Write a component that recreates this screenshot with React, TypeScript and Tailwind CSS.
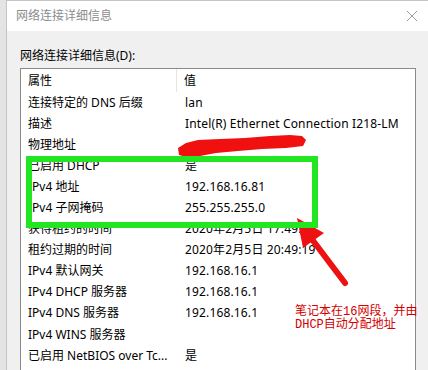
import React from "react";

const rows: [string, string][] = [
  ["连接特定的 DNS 后缀", "lan"],
  ["描述", "Intel(R) Ethernet Connection I218-LM"],
  ["物理地址", ""],
  ["已启用 DHCP", "是"],
  ["IPv4 地址", "192.168.16.81"],
  ["IPv4 子网掩码", "255.255.255.0"],
  ["获得租约的时间", "2020年2月5日 17:49:19"],
  ["租约过期的时间", "2020年2月5日 20:49:19"],
  ["IPv4 默认网关", "192.168.16.1"],
  ["IPv4 DHCP 服务器", "192.168.16.1"],
  ["IPv4 DNS 服务器", "192.168.16.1"],
  ["IPv4 WINS 服务器", ""],
  ["已启用 NetBIOS over Tc...", "是"],
];

export default function App() {
  return (
    <div
      className="relative w-[428px] h-[370px] overflow-hidden bg-[#e4e4e4] flex"
      style={{ fontFamily: '"Noto Sans", "Noto Sans CJK SC", sans-serif' }}
    >
      <div className="w-[6px] shrink-0 bg-[#e4e4e4]" />
      <div className="flex-1 flex flex-col border-l border-t border-[#c4c4c4] bg-[#f0f0f0]">
        <div className="h-[30px] shrink-0 bg-white flex items-center justify-between pl-[9px] pr-[9px]">
          <span className="text-[12px] text-[#8c8c8c]">网络连接详细信息</span>
          <svg width="12" height="12" viewBox="0 0 12 12" className="mr-[1px]">
            <path d="M1 1 L11 11 M11 1 L1 11" stroke="#9a9a9a" strokeWidth="1" fill="none" />
          </svg>
        </div>
        <div className="flex-1 flex flex-col pl-[13px] pr-[12px]">
          <div className="h-[37px] shrink-0 flex items-end pb-[6px] text-[12px] text-black leading-none">
            网络连接详细信息(D):
          </div>
          <div className="flex-1 bg-white border border-[#8a8a8a] border-b-0 text-[12px] text-black">
            <div className="h-[23px] flex items-center">
              <div className="w-[156px] pl-[7px] border-r border-[#e5e5e5] h-full flex items-center">属性</div>
              <div className="pl-[7px]">值</div>
            </div>
            {rows.map(([k, v], i) => (
              <div key={i} className="h-[21.1px] flex items-center whitespace-nowrap">
                <div className="w-[157px] pl-[7px] overflow-hidden">{k}</div>
                <div className="pl-[7px] tracking-[0.15px]">{v}</div>
              </div>
            ))}
          </div>
        </div>
      </div>

      {/* red scribble and arrow */}
      <svg className="absolute left-0 top-0 pointer-events-none" width="428" height="370" viewBox="0 0 428 370">
        <polygon
          points="178,148 186,143 198,140 220,139 245,138 270,136 290,135 302,136 306,140 303,146 286,148 262,149 238,151 216,153 200,156 186,157 179,155"
          fill="#f01010"
        />
        <line x1="345" y1="283" x2="311" y2="238" stroke="#ee1111" strokeWidth="6" strokeLinecap="round" />
        <polygon points="297,218 324,233 303,248" fill="#ee1111" />
      </svg>

      {/* green box */}
      <div className="absolute left-[26px] top-[156px] w-[292px] h-[72px] border-[6px] border-[#22e622]" />

      {/* annotation */}
      <div
        className="absolute left-[295px] top-[306px] text-[12px] leading-[13px] text-[#d40000] whitespace-nowrap"
        style={{ fontFamily: '"Liberation Mono", "Noto Sans CJK SC", monospace' }}
      >
        <div className="h-[13px]">笔记本在16网段，并由</div>
        <div className="h-[13px]">DHCP自动分配地址</div>
      </div>
    </div>
  );
}
